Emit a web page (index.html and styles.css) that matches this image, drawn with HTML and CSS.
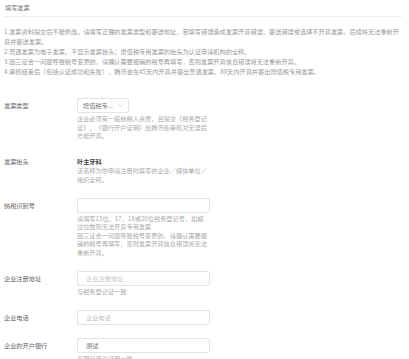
FILE: index.html
```html
<!DOCTYPE html>
<html lang="zh-CN">
<head>
<meta charset="utf-8"/>
<title>填写发票</title>
<link rel="stylesheet" href="styles.css">
</head>
<body>
<div class="invoice">
  <div class="invoice-head">填写发票</div>
  <ul class="notice">
    <li>1.发票资料提交后不能修改。请填写正确的发票类型和寄送地址，若填写错误造成发票开具错误，寄送错误或选择不开具发票，后续将无法重新开具并寄送发票。</li>
    <li>2.普通发票为电子发票，不显示发票抬头；增值税专用发票的抬头为认证申请机构的全称。</li>
    <li>3.因三证合一问题导致税号变更的，请确认需要报销的税号再填写，否则发票开具信息错误将无法重新开具。</li>
    <li>4.审核结束后（包括认证成功和失败），腾讯会在45天内开具并寄出普通发票，80天内开具并寄出增值税专用发票。</li>
  </ul>

  <div class="form">
    <div class="row">
      <div class="row-label">发票类型</div>
      <div class="row-field">
        <div class="select">
          <span>增值税专...</span>
          <svg class="caret" width="5" height="3" viewBox="0 0 5 3"><path d="M0.5 0.5 L2.5 2.5 L4.5 0.5" fill="none" stroke="#bbb" stroke-width="0.8"/></svg>
        </div>
        <p class="help">企业必须有一般纳税人资质，且提交《税务登记证》、《银行开户证明》给腾讯会审核对无误后方能开具。</p>
      </div>
    </div>

    <div class="row row--text">
      <div class="row-label">发票抬头</div>
      <div class="row-field">
        <div class="value">叶主牙科</div>
        <p class="help">该名称为你申请注册时填写的企业／媒体单位／组织全称。</p>
      </div>
    </div>

    <div class="row">
      <div class="row-label">纳税识别号</div>
      <div class="row-field">
        <div class="input"></div>
        <p class="help">请填写15位、17、18或20位税务登记号，如超过位数则无法开具专用发票</p>
        <p class="help help--flush">因三证合一问题导致税号变更的，请确认需要报销的税号再填写，否则发票开具信息错误将无法重新开具。</p>
      </div>
    </div>

    <div class="row">
      <div class="row-label">企业注册地址</div>
      <div class="row-field">
        <div class="input input--empty">企业注册地址</div>
        <p class="help">与税务登记证一致</p>
      </div>
    </div>

    <div class="row">
      <div class="row-label">企业电话</div>
      <div class="row-field">
        <div class="input input--empty">企业电话</div>
      </div>
    </div>

    <div class="row">
      <div class="row-label">企业的开户银行</div>
      <div class="row-field">
        <div class="input">测试</div>
        <p class="help">与银行开户证明一致</p>
      </div>
    </div>
  </div>
</div>
</body>
</html>
```

FILE: styles.css
```css
* { box-sizing: border-box; }

body {
  margin: 0;
  background: #fff;
  font-family: "Noto Sans CJK SC", "Noto Sans", sans-serif;
  font-size: 6.2px;
  color: #666;
  text-spacing-trim: space-all;
}

.invoice { padding: 0 7px 0 4px; }

.invoice-head {
  height: 17px;
  line-height: 16px;
  padding-left: 1px;
  border-bottom: 1px solid #eee;
  color: #777;
}

.notice {
  list-style: none;
  margin: 10px 0 0;
  padding: 0;
  line-height: 10px;
  color: #999;
}

.form { margin-top: 21px; }

.row {
  display: grid;
  grid-template-columns: 73px 133px;
  margin-bottom: 13.5px;
}

.row-label {
  line-height: 15px;
  color: #666;
}

.select {
  display: flex;
  align-items: center;
  justify-content: space-between;
  width: 52px;
  height: 15px;
  padding: 0 5px;
  border: 1px solid #e3e3e3;
  border-radius: 2px;
  color: #777;
}

.caret { display: block; }

.row--text { padding-top: 3px; }
.row--text .row-label { line-height: 10px; }

.value {
  line-height: 10px;
  font-weight: bold;
  color: #444;
}

.input {
  height: 15px;
  line-height: 13px;
  padding: 0 8px;
  border: 1px solid #e3e3e3;
  border-radius: 2px;
  color: #666;
}

.input--empty { color: #c4c4c4; }

.help {
  width: 131.5px;
  margin: 2px 0 0;
  line-height: 8.5px;
  color: #aaa;
  line-break: anywhere;
}

.row--text .help, .help--flush { margin-top: 0; }
```
